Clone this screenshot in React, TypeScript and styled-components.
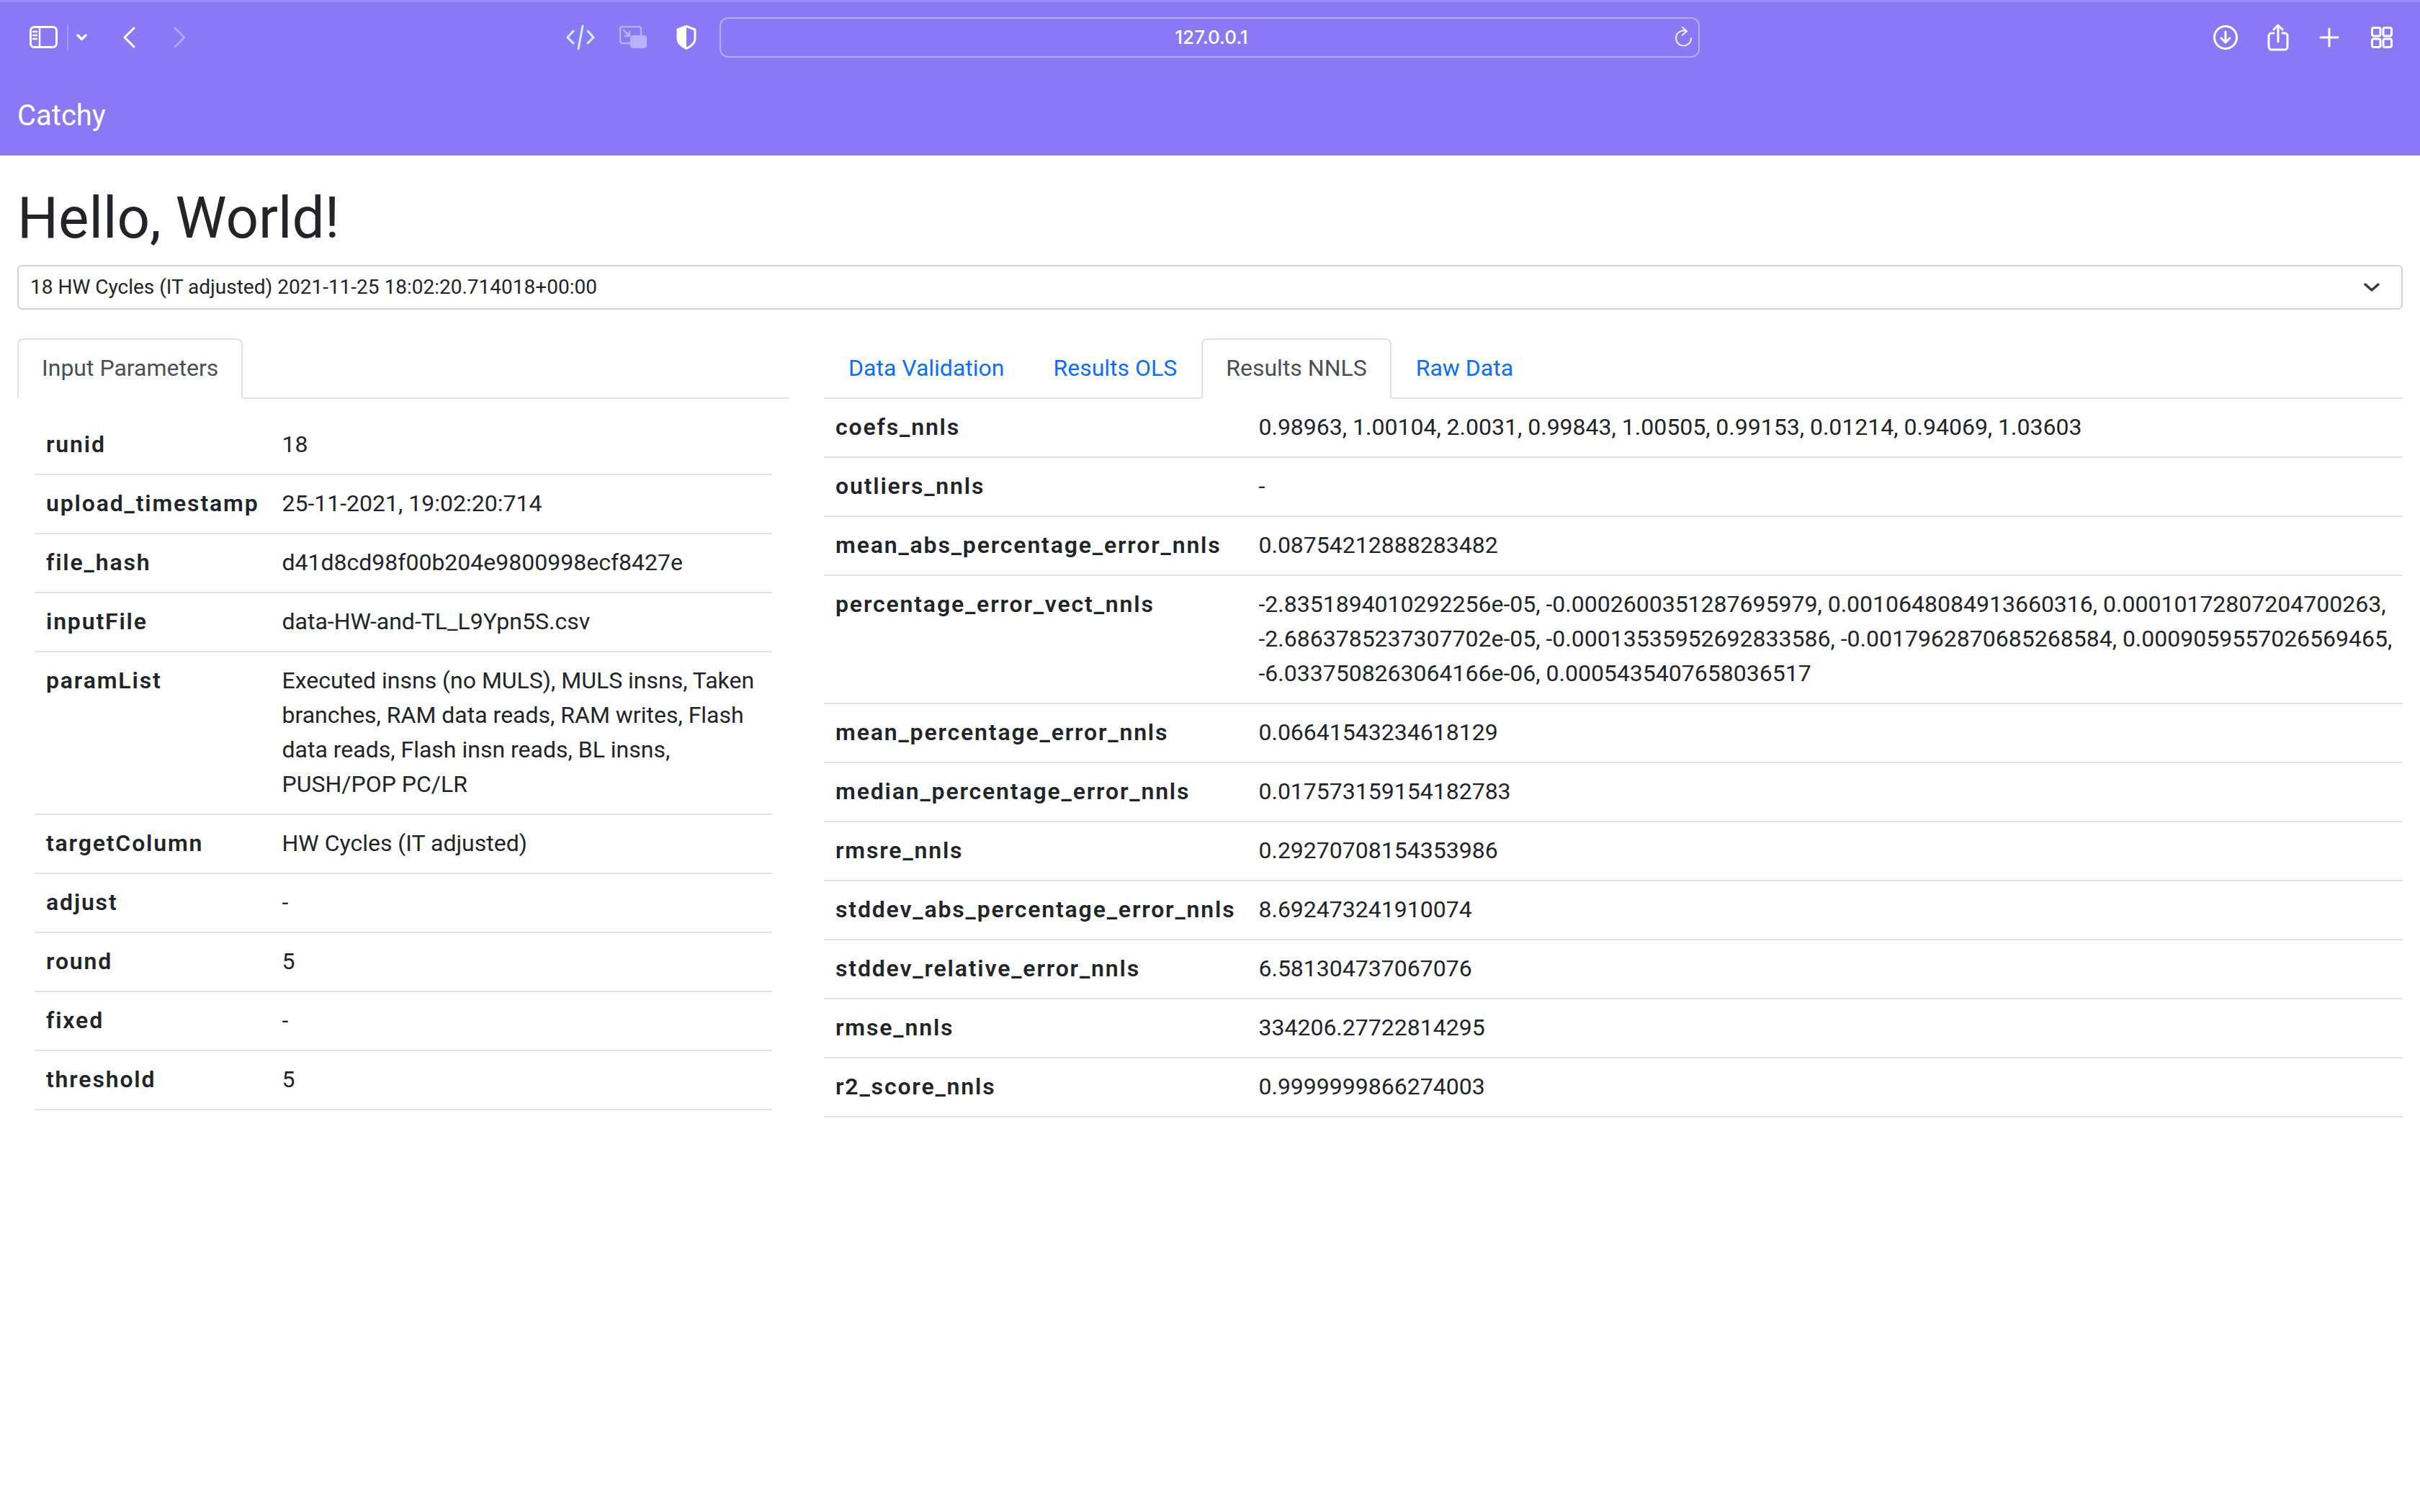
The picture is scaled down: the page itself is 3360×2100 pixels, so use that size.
import React from "react";
import styled, { createGlobalStyle } from "styled-components";

const GlobalStyle = createGlobalStyle`
  html, body {
    margin: 0;
    background: #fff;
    color: #212529;
    font-family: Roboto, "Liberation Sans", sans-serif;
    font-size: 32px;
    line-height: 48px;
  }
  * { box-sizing: border-box; }
`;

const Navbar = styled.nav`
  background: #8b78f7;
  border-top: 3px solid #9d8cf9;
  height: 216px;
`;

const Toolbar = styled.div`
  display: flex;
  align-items: center;
  height: 97px;
  padding: 0 38px 0 41px;
  color: #fff;
`;

const Icon = styled.svg<{ $left?: number; $faded?: boolean }>`
  display: block;
  flex: none;
  margin-left: ${(p) => p.$left ?? 0}px;
  opacity: ${(p) => (p.$faded ? 0.35 : 1)};
  fill: none;
  stroke: currentColor;
  stroke-width: 3;
  stroke-linecap: round;
  stroke-linejoin: round;
`;

const Separator = styled.div`
  width: 2px;
  height: 36px;
  margin-left: 13px;
  background: rgba(255, 255, 255, 0.22);
`;

const AddressBar = styled.div`
  position: relative;
  width: 1361px;
  height: 56px;
  margin-left: 32px;
  padding-left: 5px;
  display: flex;
  align-items: center;
  justify-content: center;
  border: 2px solid rgba(255, 255, 255, 0.38);
  border-radius: 12px;
  font-family: Inter, Roboto, sans-serif;
  font-size: 26px;
  font-weight: 500;
  line-height: 30px;
  color: #fff;
`;

const Reload = styled.svg`
  position: absolute;
  right: 7px;
  top: 11px;
  fill: none;
  stroke: rgba(255, 255, 255, 0.9);
  stroke-width: 2;
  stroke-linecap: round;
  stroke-linejoin: round;
`;

const Spacer = styled.div`
  flex: 1;
`;

const Brand = styled.a`
  display: block;
  margin: 31px 0 0 24px;
  color: #fff;
  font-size: 40px;
  line-height: 60px;
`;

const Page = styled.main`
  padding: 0 24px;
`;

const Title = styled.h1`
  margin: 39px 0 17px;
  font-size: 80px;
  font-weight: 400;
  line-height: 96px;
`;

const RunSelect = styled.div`
  display: flex;
  align-items: center;
  justify-content: space-between;
  height: 62px;
  padding: 0 29px 1px 16px;
  border: 2px solid #ced4da;
  border-radius: 6px;
  font-size: 28px;
  line-height: 42px;

  svg {
    margin-top: 1px;
  }
`;

const Columns = styled.div`
  display: grid;
  grid-template-columns: 1072px 2192px;
  column-gap: 48px;
  margin-top: 40px;
`;

const Tabs = styled.ul`
  display: flex;
  margin: 0;
  padding: 0;
  list-style: none;
  border-bottom: 2px solid #dee2e6;
`;

const Tab = styled.li<{ $active?: boolean }>`
  margin-bottom: -2px;
  padding: 15px 32px 17px;
  border: 2px solid ${(p) => (p.$active ? "#dee2e6" : "transparent")};
  border-bottom-color: ${(p) => (p.$active ? "#fff" : "transparent")};
  border-radius: 8px 8px 0 0;
  color: ${(p) => (p.$active ? "#495057" : "#0d6efd")};
`;

const Table = styled.table<{ $inset?: boolean }>`
  width: ${(p) => (p.$inset ? "calc(100% - 48px)" : "100%")};
  margin: ${(p) => (p.$inset ? "24px 24px 0" : "0")};
  border-collapse: collapse;
`;

const Row = styled.tr`
  border-bottom: 2px solid #dee2e6;
`;

const Label = styled.th`
  padding: 15px 16px 17px;
  font-weight: 600;
  letter-spacing: 1.84px;
  text-align: left;
  vertical-align: top;
  white-space: nowrap;
`;

const Value = styled.td`
  padding: 15px 10px 17px 16px;
  vertical-align: top;
`;

const inputParams: [string, string][] = [
  ["runid", "18"],
  ["upload_timestamp", "25-11-2021, 19:02:20:714"],
  ["file_hash", "d41d8cd98f00b204e9800998ecf8427e"],
  ["inputFile", "data-HW-and-TL_L9Ypn5S.csv"],
  [
    "paramList",
    "Executed insns (no MULS), MULS insns, Taken branches, RAM data reads, RAM writes, Flash data reads, Flash insn reads, BL insns, PUSH/POP PC/LR",
  ],
  ["targetColumn", "HW Cycles (IT adjusted)"],
  ["adjust", "-"],
  ["round", "5"],
  ["fixed", "-"],
  ["threshold", "5"],
];

const results: [string, string][] = [
  ["coefs_nnls", "0.98963, 1.00104, 2.0031, 0.99843, 1.00505, 0.99153, 0.01214, 0.94069, 1.03603"],
  ["outliers_nnls", "-"],
  ["mean_abs_percentage_error_nnls", "0.08754212888283482"],
  [
    "percentage_error_vect_nnls",
    "-2.8351894010292256e-05, -0.0002600351287695979, 0.0010648084913660316, 0.00010172807204700263, -2.6863785237307702e-05, -0.00013535952692833586, -0.0017962870685268584, 0.0009059557026569465, -6.0337508263064166e-06, 0.0005435407658036517",
  ],
  ["mean_percentage_error_nnls", "0.06641543234618129"],
  ["median_percentage_error_nnls", "0.017573159154182783"],
  ["rmsre_nnls", "0.29270708154353986"],
  ["stddev_abs_percentage_error_nnls", "8.692473241910074"],
  ["stddev_relative_error_nnls", "6.581304737067076"],
  ["rmse_nnls", "334206.27722814295"],
  ["r2_score_nnls", "0.9999999866274003"],
];

const KeyValueTable = ({ rows, inset }: { rows: [string, string][]; inset?: boolean }) => (
  <Table $inset={inset}>
    <tbody>
      {rows.map(([key, value]) => (
        <Row key={key}>
          <Label>{key}</Label>
          <Value>{value}</Value>
        </Row>
      ))}
    </tbody>
  </Table>
);

const App = () => (
  <>
    <GlobalStyle />
    <Navbar>
      <Toolbar>
        <Icon width="39" height="31" viewBox="0 0 39 31">
          <rect x="1.5" y="1.5" width="36" height="28" rx="5" />
          <path d="M14 2v27M5 8h5M5 13h5M5 18h5" strokeWidth="2.5" />
        </Icon>
        <Separator />
        <Icon width="15" height="10" viewBox="0 0 15 10" $left={11}>
          <path d="M2 2l5.500 5.500L13 2" strokeWidth="3.500" />
        </Icon>
        <Icon width="18" height="30" viewBox="0 0 18 30" $left={49}>
          <path d="M16 2L3 15l13 13" />
        </Icon>
        <Icon width="18" height="30" viewBox="0 0 18 30" $left={53} $faded>
          <path d="M2 2l13 13L2 28" />
        </Icon>
        <Icon width="40" height="36" viewBox="0 0 40 36" $left={527} style={{ color: "#c9f6ff" }}>
          <path d="M10 9L2 18l8 8M30 9l8 9-8 8M23 2l-6 32" />
        </Icon>
        <Icon width="38" height="31" viewBox="0 0 38 31" $left={34} $faded style={{ opacity: 0.42 }}>
          <path d="M22 24H4a3 3 0 0 1-3-3V4a3 3 0 0 1 3-3h23a3 3 0 0 1 3 3v9" strokeWidth="2.500" />
          <path d="M6 6l8 8M14 8v6H8" strokeWidth="2.500" />
          <rect x="15" y="13" width="23" height="18" rx="4" fill="#fff" stroke="none" />
        </Icon>
        <Icon width="28" height="34" viewBox="0 0 28 34" $left={41}>
          <path d="M14 1.500L2 6v13c0 6 5 10 12 13.500C21 29 26 25 26 19V6L14 1.500z" />
          <path d="M14 1.500L2 6v13c0 6 5 10 12 13.500V1.500z" fill="#fff" stroke="none" />
        </Icon>
        <AddressBar>
          127.0.0.1
          <Reload width="26" height="30" viewBox="0 0 26 30">
            <path d="M17 6.500A10.500 10.500 0 1 0 23 16" />
            <path d="M11 1l6 5.500-6 5" />
          </Reload>
        </AddressBar>
        <Spacer />
        <Icon width="34" height="34" viewBox="0 0 34 34">
          <circle cx="17" cy="17" r="15.500" />
          <path d="M17 9v15M11 18l6 6 6-6" />
        </Icon>
        <Icon width="30" height="38" viewBox="0 0 30 38" $left={41}>
          <path d="M9 13H6a4 4 0 0 0-4 4v15a4 4 0 0 0 4 4h18a4 4 0 0 0 4-4V17a4 4 0 0 0-4-4h-3" />
          <path d="M15 25V2M9 8l6-6 6 6" />
        </Icon>
        <Icon width="28" height="28" viewBox="0 0 28 28" $left={42}>
          <path d="M14 2v24M2 14h24" />
        </Icon>
        <Icon width="30" height="30" viewBox="0 0 30 30" $left={44}>
          <rect x="1.500" y="1.500" width="11.500" height="11.500" rx="2.500" />
          <rect x="17" y="1.500" width="11.500" height="11.500" rx="2.500" />
          <rect x="1.500" y="17" width="11.500" height="11.500" rx="2.500" />
          <rect x="17" y="17" width="11.500" height="11.500" rx="2.500" />
        </Icon>
      </Toolbar>
      <Brand>Catchy</Brand>
    </Navbar>
    <Page>
      <Title>Hello, World!</Title>
      <RunSelect>
        18 HW Cycles (IT adjusted) 2021-11-25 18:02:20.714018+00:00
        <svg width="24" height="14" viewBox="0 0 24 14" fill="none" stroke="#343a40" strokeWidth="3.500" strokeLinecap="round" strokeLinejoin="round">
          <path d="M3 3l9 8 9-8" />
        </svg>
      </RunSelect>
      <Columns>
        <section>
          <Tabs>
            <Tab $active>Input Parameters</Tab>
          </Tabs>
          <KeyValueTable rows={inputParams} inset />
        </section>
        <section>
          <Tabs>
            <Tab>Data Validation</Tab>
            <Tab>Results OLS</Tab>
            <Tab $active>Results NNLS</Tab>
            <Tab>Raw Data</Tab>
          </Tabs>
          <KeyValueTable rows={results} />
        </section>
      </Columns>
    </Page>
  </>
);

export default App;
